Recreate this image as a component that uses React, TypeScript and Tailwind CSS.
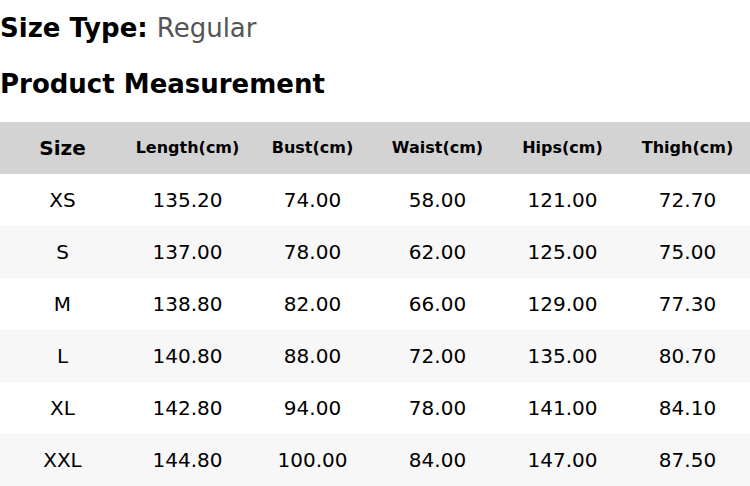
const headers = ['Size', 'Length(cm)', 'Bust(cm)', 'Waist(cm)', 'Hips(cm)', 'Thigh(cm)'];

const rows = [
  ['XS', '135.20', '74.00', '58.00', '121.00', '72.70'],
  ['S', '137.00', '78.00', '62.00', '125.00', '75.00'],
  ['M', '138.80', '82.00', '66.00', '129.00', '77.30'],
  ['L', '140.80', '88.00', '72.00', '135.00', '80.70'],
  ['XL', '142.80', '94.00', '78.00', '141.00', '84.10'],
  ['XXL', '144.80', '100.00', '84.00', '147.00', '87.50'],
];

export default function App() {
  return (
    <div className="w-[750px] h-[486px] overflow-hidden bg-white text-black font-['DejaVu_Sans',sans-serif]">
      <p className="text-[26px] leading-[56px] font-bold">
        Size Type: <span className="font-normal text-[#555555]">Regular</span>
      </p>
      <h2 className="text-[26px] leading-[56px] font-bold">Product Measurement</h2>
      <div className="mt-[10px]">
        <div className="grid grid-cols-6 h-[52px] bg-[#d3d3d3] items-center text-center font-bold">
          {headers.map((h, i) => (
            <div key={h} className={i === 0 ? 'text-[20px]' : 'text-[16px]'}>{h}</div>
          ))}
        </div>
        {rows.map((r, i) => (
          <div key={r[0]} className={`grid grid-cols-6 h-[52px] items-center text-center text-[20px] ${i % 2 ? 'bg-[#f7f7f7]' : 'bg-white'}`}>
            {r.map((c, j) => <div key={j}>{c}</div>)}
          </div>
        ))}
      </div>
    </div>
  );
}
